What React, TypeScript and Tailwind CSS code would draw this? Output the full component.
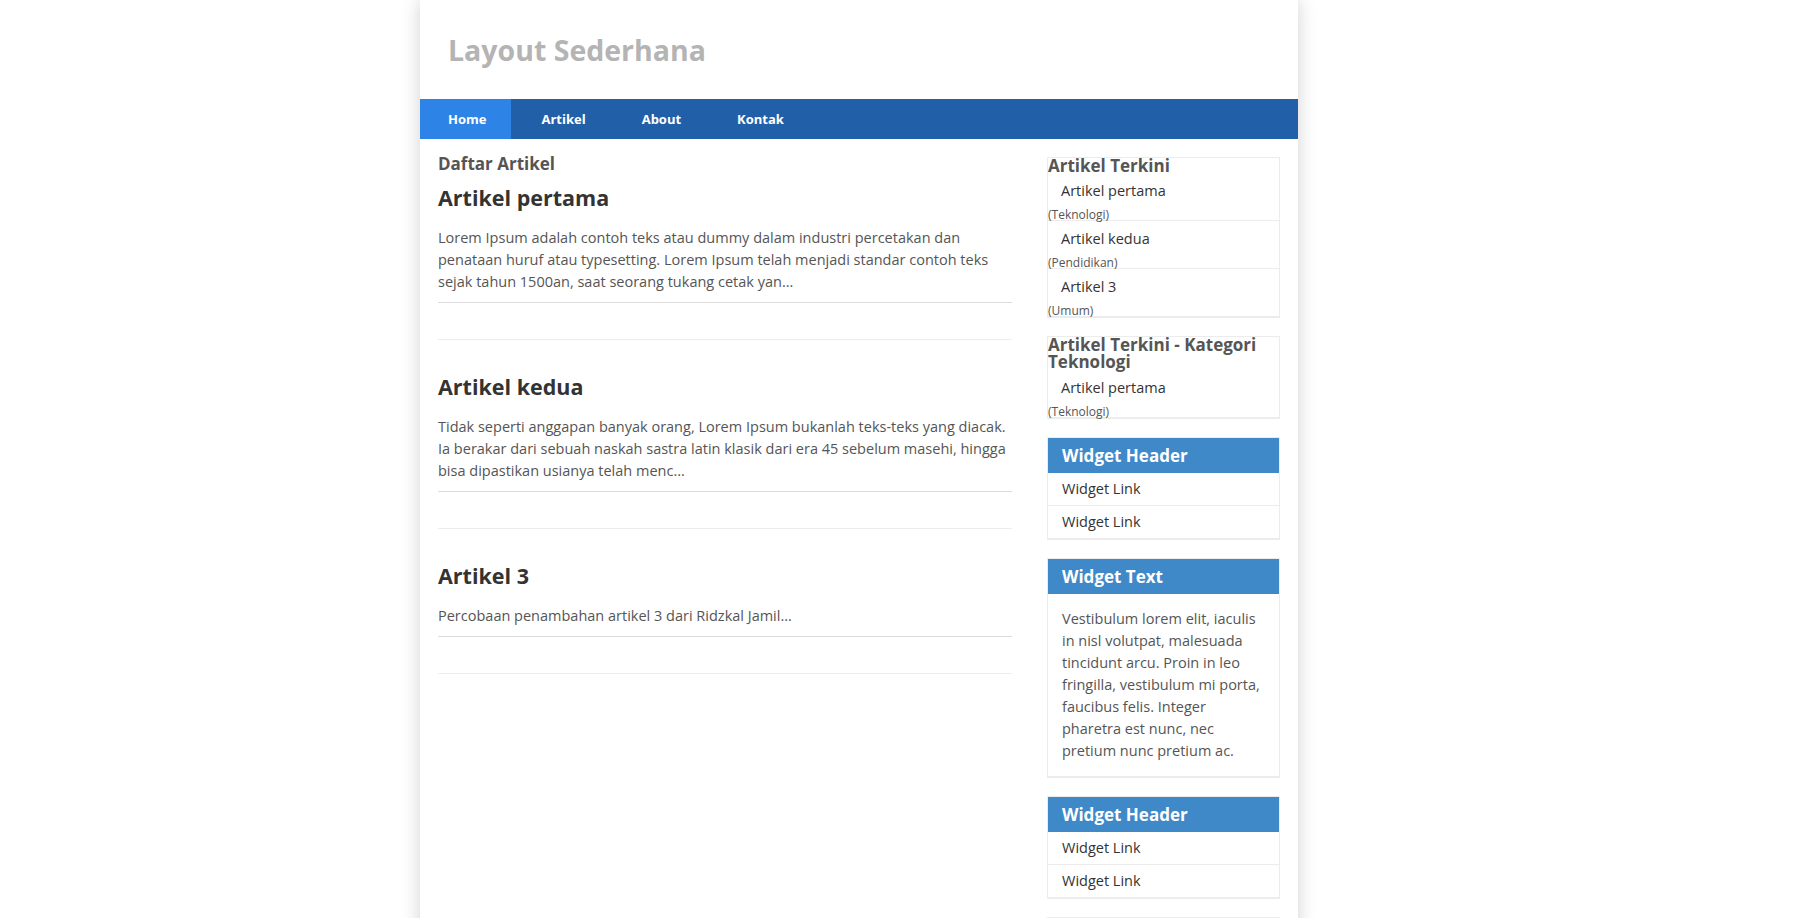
import React from "react";

const articles = [
  {
    title: "Artikel pertama",
    body: "Lorem Ipsum adalah contoh teks atau dummy dalam industri percetakan dan penataan huruf atau typesetting. Lorem Ipsum telah menjadi standar contoh teks sejak tahun 1500an, saat seorang tukang cetak yan...",
  },
  {
    title: "Artikel kedua",
    body: "Tidak seperti anggapan banyak orang, Lorem Ipsum bukanlah teks-teks yang diacak. Ia berakar dari sebuah naskah sastra latin klasik dari era 45 sebelum masehi, hingga bisa dipastikan usianya telah menc...",
  },
  {
    title: "Artikel 3",
    body: "Percobaan penambahan artikel 3 dari Ridzkal Jamil...",
  },
];

function RecentItem({ title, cat, last }: { title: string; cat: string; last?: boolean }) {
  return (
    <div className={last ? "h-[47px]" : "h-[48px] border-b border-[#ececec]"}>
      <div className="pt-[8px] pl-[13px] text-[14.5px] leading-[20px] text-[#333]">{title}</div>
      <div className="mt-[8px] text-[12px] leading-[12px] text-[#555]">{cat}</div>
    </div>
  );
}

function LinkWidget({ title }: { title: string }) {
  return (
    <div className="border border-[#ececec] border-b-2">
      <div className="h-[35px] bg-[#3f89c9] pl-[14px] text-[17px] font-bold leading-[35px] text-white">{title}</div>
      <div className="h-[33px] border-b border-[#ececec] pl-[14px] text-[14.5px] leading-[32px] text-[#333]">Widget Link</div>
      <div className="h-[32px] pl-[14px] text-[14.5px] leading-[32px] text-[#333]">Widget Link</div>
    </div>
  );
}

export default function App() {
  return (
    <div className="min-h-screen bg-white font-['Open_Sans',sans-serif]">
      <div className="ml-[420px] w-[878px] bg-white pb-[60px] shadow-[0_0_18px_rgba(0,0,0,0.18)]">
        <header className="h-[99px] pl-[28px] pt-[32px]">
          <h1 className="text-[28.5px] font-bold leading-[36px] text-[#b4b4b4]">Layout Sederhana</h1>
        </header>
        <nav className="flex h-[40px] bg-[#2160a9]">
          {["Home", "Artikel", "About", "Kontak"].map((n, i) => (
            <a
              key={n}
              className={
                "text-[13px] font-bold leading-[40px] text-white " +
                (i === 0 ? "bg-[#2e83e6] pl-[28px] pr-[25px]" : i === 1 ? "ml-[2px] px-[28px]" : "px-[28px]")
              }
            >
              {n}
            </a>
          ))}
        </nav>
        <div className="flex gap-[35px] px-[18px]">
          <main className="w-[574px] pt-[13px]">
            <h3 className="text-[17px] font-bold leading-[24px] text-[#555]">Daftar Artikel</h3>
            {articles.map((a, i) => (
              <article key={a.title}>
                <h2 className={(i === 0 ? "mt-[7px]" : "mt-[32px]") + " text-[21.5px] font-bold leading-[30px] text-[#333]"}>
                  {a.title}
                </h2>
                <p className="mt-[14px] text-[14.5px] leading-[22px] text-[#555]">{a.body}</p>
                <div className="mt-[9px] h-[37px] border-t border-[#dcdcdc]" />
                <div className="border-t border-[#ededed]" />
              </article>
            ))}
          </main>
          <aside className="flex w-[233px] flex-col gap-[18px] pt-[18px]">
            <div className="border border-[#ececec] border-b-2">
              <h4 className="text-[17px] font-bold leading-[15px] text-[#555]">Artikel Terkini</h4>
              <RecentItem title="Artikel pertama" cat="(Teknologi)" />
              <RecentItem title="Artikel kedua" cat="(Pendidikan)" />
              <RecentItem title="Artikel 3" cat="(Umum)" last />
            </div>
            <div className="border border-[#ececec] border-b-2">
              <h4 className="text-[17px] font-bold leading-[16.5px] text-[#555]">Artikel Terkini - Kategori Teknologi</h4>
              <RecentItem title="Artikel pertama" cat="(Teknologi)" last />
            </div>
            <LinkWidget title="Widget Header" />
            <div className="border border-[#ececec] border-b-2">
              <div className="h-[35px] bg-[#3f89c9] pl-[14px] text-[17px] font-bold leading-[35px] text-white">Widget Text</div>
              <p className="px-[14px] py-[14px] text-[14.5px] leading-[22px] text-[#555]">
                Vestibulum lorem elit, iaculis in nisl volutpat, malesuada tincidunt arcu. Proin in leo fringilla, vestibulum mi porta, faucibus felis. Integer pharetra est nunc, nec pretium nunc pretium ac.
              </p>
            </div>
            <LinkWidget title="Widget Header" />
            <LinkWidget title="Widget Header" />
            <div className="border border-[#ececec] border-b-2">
              <div className="h-[35px] bg-[#3f89c9] pl-[14px] text-[17px] font-bold leading-[35px] text-white">Widget Text</div>
              <p className="px-[14px] py-[14px] text-[14.5px] leading-[22px] text-[#555]">
                Vestibulum lorem elit, iaculis in nisl volutpat, malesuada tincidunt arcu.
              </p>
            </div>
          </aside>
        </div>
      </div>
    </div>
  );
}
